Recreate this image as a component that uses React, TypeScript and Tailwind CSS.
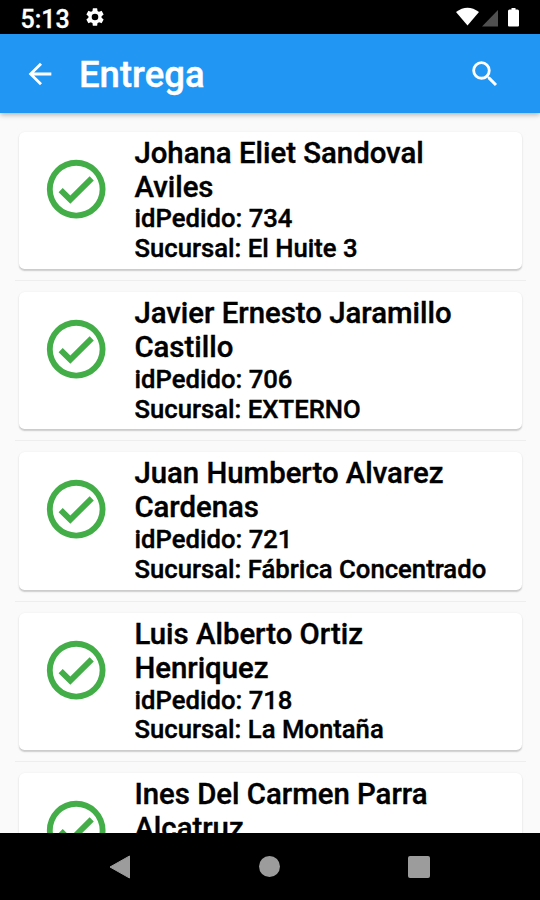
import React from 'react';

interface Delivery {
  name: string;
  id?: number;
  branch?: string;
}

const deliveries: Delivery[] = [
  { id: 734, name: 'Johana Eliet Sandoval Aviles', branch: 'El Huite 3' },
  { id: 706, name: 'Javier Ernesto Jaramillo Castillo', branch: 'EXTERNO' },
  { id: 721, name: 'Juan Humberto Alvarez Cardenas', branch: 'Fábrica Concentrado' },
  { id: 718, name: 'Luis Alberto Ortiz Henriquez', branch: 'La Montaña' },
  { name: 'Ines Del Carmen Parra Alcatruz' },
];

const Icon: React.FC<{ d: string; className: string }> = ({ d, className }) => (
  <svg viewBox="0 0 24 24" fill="currentColor" className={`shrink-0 ${className}`}>
    <path d={d} />
  </svg>
);

const GEAR =
  'M19.14 12.94c.04-.3.06-.61.06-.94s-.02-.64-.07-.94l2.03-1.58a.49.49 0 0 0 .12-.61l-1.92-3.32a.49.49 0 0 0-.59-.22l-2.39.96c-.5-.38-1.03-.7-1.62-.94l-.36-2.54a.48.48 0 0 0-.48-.41h-3.84a.48.48 0 0 0-.47.41l-.36 2.54c-.59.24-1.13.57-1.62.94l-2.39-.96a.48.48 0 0 0-.59.22L2.74 8.87a.48.48 0 0 0 .12.61l2.03 1.58c-.05.3-.09.63-.09.94s.02.64.07.94l-2.03 1.58a.49.49 0 0 0-.12.61l1.92 3.32c.12.22.37.29.59.22l2.39-.96c.5.38 1.03.7 1.62.94l.36 2.54c.05.24.24.41.48.41h3.84c.24 0 .44-.17.47-.41l.36-2.54c.59-.24 1.13-.56 1.62-.94l2.39.96c.22.08.47 0 .59-.22l1.92-3.32a.48.48 0 0 0-.12-.61zM12 15.6a3.6 3.6 0 1 1 0-7.2 3.6 3.6 0 0 1 0 7.2z';
const BACK = 'M20 11H7.83l5.59-5.59L12 4l-8 8 8 8 1.41-1.41L7.83 13H20z';
const SEARCH =
  'M15.5 14h-.79l-.28-.27A6.47 6.47 0 0 0 16 9.5 6.5 6.5 0 1 0 9.5 16c1.61 0 3.09-.59 4.23-1.57l.27.28v.79l5 4.99L20.49 19zm-6 0a4.5 4.5 0 1 1 0-9 4.5 4.5 0 0 1 0 9z';
const CHECK =
  'M16.59 7.58 10 14.17l-2.59-2.58L6 13l4 4 8-8zM12 2a10 10 0 1 0 0 20 10 10 0 0 0 0-20zm0 18a8 8 0 1 1 0-16 8 8 0 0 1 0 16z';

const StatusBar: React.FC = () => (
  <div className="flex h-[34px] shrink-0 items-center bg-black pl-[20.5px] pr-[20px] text-white">
    <span className="mt-[4px] text-[25px] font-medium leading-none [-webkit-text-stroke:0.3px_white]">5:13</span>
    <Icon d={GEAR} className="ml-[14px] h-[22px] w-[22px]" />
    {/* wifi, signal, battery */}
    <svg viewBox="0 0 64 20" className="ml-auto h-[20px] w-[64px]">
      <path d="M0 5Q11.500 -3.500 23 5L11.500 18.500z" fill="#fff" />
      <path d="M42 3V19.500H26z" fill="#505050" />
      <path d="M55.500 1h4v1.500h2q1.500 0 1.500 1.500V18.500q0 1-1 1h-9q-1 0-1-1V4q0-1.500 1.500-1.500h2z" fill="#fff" />
    </svg>
  </div>
);

const AppBar: React.FC = () => (
  <header className="relative z-10 flex h-[79px] shrink-0 items-center bg-[#2196f3] pl-[23px] pr-[38px] text-white shadow-[0_2px_5px_rgba(0,0,0,0.28)]">
    <Icon d={BACK} className="h-[34px] w-[34px]" />
    <h1 className="ml-[22px] mt-[3px] text-[36.5px] font-medium leading-none [-webkit-text-stroke:0.4px_white]">Entrega</h1>
    <Icon d={SEARCH} className="ml-auto h-[34px] w-[34px]" />
  </header>
);

const DeliveryCard: React.FC<{ delivery: Delivery }> = ({ delivery }) => (
  <div className="mx-[4px] flex h-[137.4px] rounded-[5.6px] bg-white pl-[22px] pt-[5px] shadow-[0_1.4px_1.5px_rgba(0,0,0,0.18),0_0_3px_rgba(0,0,0,0.04)]">
    <Icon d={CHECK} className="mt-[17px] h-[70.4px] w-[70.4px] text-[#43ad48]" />
    <div className="ml-[23px] w-[346px] font-medium text-black [-webkit-text-stroke:0.4px_black]">
      <h2 className="text-[29.35px] leading-[33.9px]">{delivery.name}</h2>
      {delivery.id && <p className="text-[25.7px] leading-[29.8px]">idPedido: {delivery.id}</p>}
      {delivery.branch && (
        <p className="whitespace-nowrap text-[25.7px] leading-[29.8px]">Sucursal: {delivery.branch}</p>
      )}
    </div>
  </div>
);

const NavBar: React.FC = () => (
  <nav className="flex h-[67px] shrink-0 items-center justify-between bg-black pl-[109px] pr-[110px]">
    <svg viewBox="0 0 22 24" className="h-[24px] w-[22px]">
      <path d="M20.500 1v22L1 12z" fill="#9c9c9c" stroke="#9c9c9c" strokeLinejoin="round" />
    </svg>
    <div className="h-[21px] w-[21px] rounded-full bg-[#9c9c9c]" />
    <div className="h-[22px] w-[22px] rounded-[2px] bg-[#9c9c9c]" />
  </nav>
);

export default function App() {
  return (
    <div className="flex h-[900px] w-[540px] flex-col overflow-hidden bg-[#fafafa] font-[Roboto,sans-serif]">
      <StatusBar />
      <AppBar />
      <main className="min-h-0 flex-1 overflow-hidden pl-[15px] pr-[14px] pt-[18.6px]">
        {deliveries.map((delivery) => (
          <React.Fragment key={delivery.name}>
            <DeliveryCard delivery={delivery} />
            <div className="my-[11px] h-px bg-[#eeeeee]" />
          </React.Fragment>
        ))}
      </main>
      <NavBar />
    </div>
  );
}
